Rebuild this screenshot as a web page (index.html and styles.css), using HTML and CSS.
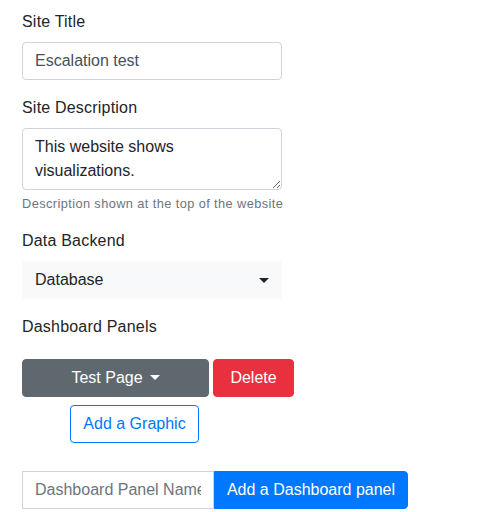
FILE: index.html
```html
<!DOCTYPE html>
<html lang="en">
<head>
<meta charset="utf-8">
<title>Site settings</title>
<link rel="stylesheet" href="styles.css">
</head>
<body>
<div class="page">
  <div class="form-group">
    <label class="label" for="title">Site Title</label>
    <input class="control" id="title" type="text" value="Escalation test">
  </div>
  <div class="form-group">
    <label class="label" for="desc">Site Description</label>
    <textarea class="control textarea" id="desc" rows="2">This website shows visualizations.</textarea>
    <div class="help">Description shown at the top of the website</div>
  </div>
  <div class="form-group">
    <div class="label">Data Backend</div>
    <div class="select"><span>Database</span><span class="caret"></span></div>
  </div>
  <div class="label">Dashboard Panels</div>
  <div class="panel-row">
    <button class="btn btn-secondary btn-page">Test Page<span class="caret caret-btn"></span></button>
    <button class="btn btn-danger btn-delete">Delete</button>
  </div>
  <div class="graphic-row">
    <button class="btn btn-outline">Add a Graphic</button>
  </div>
  <div class="input-group">
    <input class="control group-input" type="text" placeholder="Dashboard Panel Name">
    <button class="btn btn-primary group-btn">Add a Dashboard panel</button>
  </div>
</div>
</body>
</html>
```

FILE: styles.css
```css
* { box-sizing: border-box; }
body {
  margin: 0;
  background: #fff;
  color: #212529;
  font-family: "Liberation Sans", Arial, sans-serif;
  font-size: 16px;
  line-height: 1.5;
}
.page {
  padding: 10px 22px;
  width: 494px;
}
.form-group {
  margin-bottom: 16px;
  width: 260px;
}
.label {
  display: block;
  margin-bottom: 8px;
  height: 24px;
  letter-spacing: 0.2px;
}
.control {
  display: block;
  width: 100%;
  height: 38px;
  padding: 6px 12px;
  font-family: inherit;
  font-size: 16px;
  line-height: 24px;
  color: #495057;
  background: #fff;
  border: 1px solid #ced4da;
  border-radius: 4px;
  margin: 0;
}
.textarea {
  height: 62px;
  resize: vertical;
  overflow: hidden;
  color: #212529;
}
.help {
  margin-top: 4px;
  font-size: 12.8px;
  line-height: 19.2px;
  letter-spacing: 0.4px;
  color: #6c757d;
  white-space: nowrap;
}
.select {
  display: flex;
  align-items: center;
  justify-content: space-between;
  height: 38px;
  padding: 6px 13px;
  background: #f8f9fa;
  border-radius: 4px;
  color: #212529;
}
.caret {
  display: inline-block;
  width: 0;
  height: 0;
  border-top: 5px solid #212529;
  border-left: 5px solid transparent;
  border-right: 5px solid transparent;
}
.caret-btn {
  border-top-color: #fff;
  margin-left: 7px;
  vertical-align: 3px;
}
.panel-row {
  display: flex;
  gap: 4px;
  margin-top: 20px;
}
.btn {
  display: inline-block;
  height: 38px;
  padding: 6px 12px;
  font-family: inherit;
  font-size: 16px;
  line-height: 24px;
  border: 1px solid transparent;
  border-radius: 4px;
  cursor: pointer;
  text-align: center;
  white-space: nowrap;
}
.btn-secondary {
  background: #5f686f;
  border-color: #5f686f;
  color: #fff;
}
.btn-page { width: 187px; }
.btn-danger {
  background: #e8303f;
  border-color: #e8303f;
  color: #fff;
}
.btn-delete { width: 81px; }
.graphic-row {
  margin-top: 8px;
  padding-left: 48px;
}
.btn-outline {
  background: #fff;
  color: #0077ff;
  border-color: #0077ff;
  width: 129px;
  padding: 6px 0;
}
.input-group {
  display: flex;
  margin-top: 28px;
  width: 386px;
}
.group-input {
  width: 192px;
  flex: none;
  border-radius: 0;
  color: #495057;
}
.group-input::placeholder { color: #6c757d; opacity: 1; }
.group-btn {
  width: 194px;
  padding: 6px 0;
  background: #0077ff;
  border-color: #0077ff;
  color: #fff;
  border-radius: 0 4px 4px 0;
}
```
